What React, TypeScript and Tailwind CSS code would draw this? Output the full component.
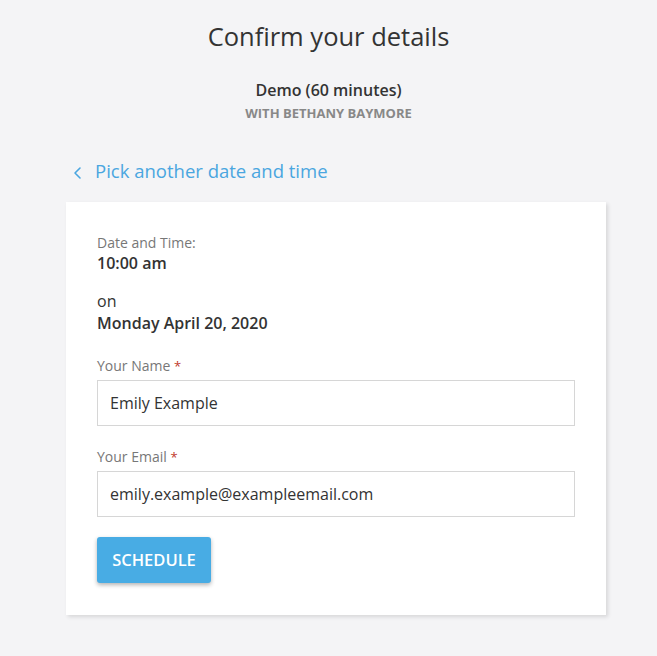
export default function App() {
  return (
    <div
      className="min-h-[656px] bg-[#f4f4f6] text-[#333] pb-10"
      style={{ fontFamily: "'Open Sans', Lato, sans-serif" }}
    >
      {/* Header */}
      <div className="pt-[20px] text-center">
        <h1 className="text-[25.5px] leading-[32px] text-[#333]">Confirm your details</h1>
        <p className="mt-[28px] text-[16px] leading-[20px] font-semibold text-[#333]">Demo (60 minutes)</p>
        <p className="mt-[3px] text-[13px] leading-[20px] font-bold uppercase text-[#888]">
          With Bethany Baymore
        </p>
      </div>

      {/* Back link */}
      <div className="mt-[36px] ml-[73px] flex items-center gap-[12px] text-[#4aa6e0]">
        <svg width="10" height="14" viewBox="0 0 10 14" fill="none" className="mt-[3px]">
          <path d="M7 2L2 7l5 5" stroke="currentColor" strokeWidth="1.6" strokeLinecap="round" strokeLinejoin="round" />
        </svg>
        <span className="text-[18.5px] leading-[24px]">Pick another date and time</span>
      </div>

      {/* Card */}
      <div className="mt-[19px] mx-[66px] w-[540px] bg-white px-[31px] pt-[32px] pb-[32px] shadow-[2px_2px_4px_rgba(0,0,0,0.12)]">
        <p className="text-[14px] leading-[18px] text-[#777]">Date and Time:</p>
        <p className="text-[16px] leading-[22px] font-semibold text-[#333]">10:00 am</p>
        <p className="mt-[16px] text-[16px] leading-[22px] text-[#333]">on</p>
        <p className="text-[16px] leading-[22px] font-semibold text-[#333]">Monday April 20, 2020</p>

        <label className="mt-[23px] block h-[18px] text-[14px] leading-[18px] text-[#777]">
          Your Name <span className="text-[13px] leading-none text-[#c0392b]">*</span>
        </label>
        <div className="mt-[5px] h-[46px] border border-[#d6d6d6] flex items-center px-[12px] text-[16px] text-[#333]">
          Emily Example
        </div>

        <label className="mt-[22px] block h-[18px] text-[14px] leading-[18px] text-[#777]">
          Your Email <span className="text-[13px] leading-none text-[#c0392b]">*</span>
        </label>
        <div className="mt-[5px] h-[46px] border border-[#d6d6d6] flex items-center px-[12px] text-[16px] text-[#333]">
          emily.example@exampleemail.com
        </div>

        <button className="mt-[20px] h-[46px] w-[114px] rounded-[3px] bg-[#48ace4] text-white text-[16.5px] font-semibold uppercase shadow-[0_2px_4px_rgba(0,0,0,0.3)]">
          Schedule
        </button>
      </div>
    </div>
  );
}
